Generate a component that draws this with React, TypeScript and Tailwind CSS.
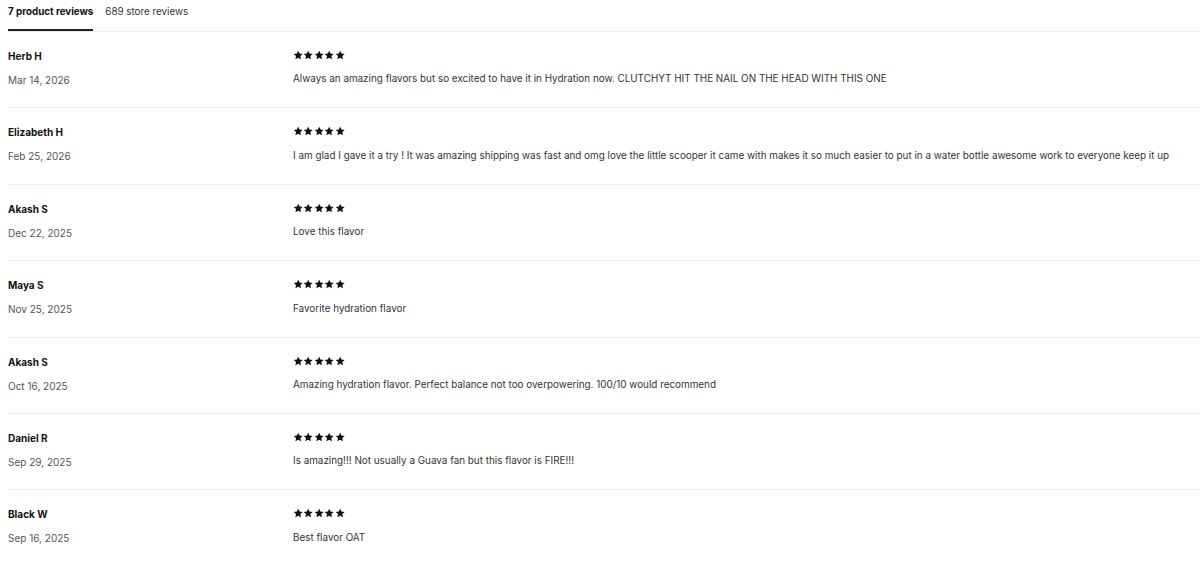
import React from 'react';

interface Review {
  name: string;
  date: string;
  text: string;
}

const REVIEWS: Review[] = [
  { name: 'Herb H', date: 'Mar 14, 2026', text: 'Always an amazing flavors but so excited to have it in Hydration now. CLUTCHYT HIT THE NAIL ON THE HEAD WITH THIS ONE' },
  { name: 'Elizabeth H', date: 'Feb 25, 2026', text: 'I am glad I gave it a try ! It was amazing shipping was fast and omg love the little scooper it came with makes it so much easier to put in a water bottle awesome work to everyone keep it up' },
  { name: 'Akash S', date: 'Dec 22, 2025', text: 'Love this flavor' },
  { name: 'Maya S', date: 'Nov 25, 2025', text: 'Favorite hydration flavor' },
  { name: 'Akash S', date: 'Oct 16, 2025', text: 'Amazing hydration flavor. Perfect balance not too overpowering. 100/10 would recommend' },
  { name: 'Daniel R', date: 'Sep 29, 2025', text: 'Is amazing!!! Not usually a Guava fan but this flavor is FIRE!!!' },
  { name: 'Black W', date: 'Sep 16, 2025', text: 'Best flavor OAT' },
];

function Star() {
  return (
    <svg viewBox="0 0 24 24" className="h-[10.4px] w-[10.4px]" fill="#111111">
      <path d="M12 1.5l3.1 6.7 7.3.9-5.4 5 1.4 7.2L12 17.8l-6.4 3.5 1.4-7.2-5.4-5 7.3-.9z" />
    </svg>
  );
}

function Stars() {
  return (
    <div className="flex items-center">
      {Array.from({ length: 5 }).map((_, i) => (
        <Star key={i} />
      ))}
    </div>
  );
}

function ReviewRow({ review }: { review: Review }) {
  return (
    <div className="flex h-[76.4px] border-b border-[#ececec]">
      <div className="flex w-[285px] shrink-0 flex-col pt-[18px]">
        <span className="text-[10px] font-bold leading-[12px] text-[#111]">{review.name}</span>
        <span className="mt-[12px] text-[10px] leading-[12px] text-[#555]">{review.date}</span>
      </div>
      <div className="flex flex-col pt-[18px]">
        <Stars />
        <span className="mt-[12px] text-[9.9px] leading-[12px] text-[#333]">{review.text}</span>
      </div>
    </div>
  );
}

export default function App() {
  return (
    <div className="min-h-[563px] bg-white pl-2" style={{ fontFamily: '"Inter", "Liberation Sans", sans-serif' }}>
      <div className="flex h-[32px] items-end border-b border-[#ececec]">
        <div className="flex h-full flex-col justify-between pt-[5px]">
          <span className="text-[9.8px] font-bold text-[#111]">7 product reviews</span>
          <div className="h-[2px] bg-[#222]" />
        </div>
        <div className="flex h-full pl-[12px] pt-[5px]">
          <span className="text-[9.8px] text-[#333]">689 store reviews</span>
        </div>
      </div>
      {REVIEWS.map((r, i) => (
        <ReviewRow key={i} review={r} />
      ))}
    </div>
  );
}
